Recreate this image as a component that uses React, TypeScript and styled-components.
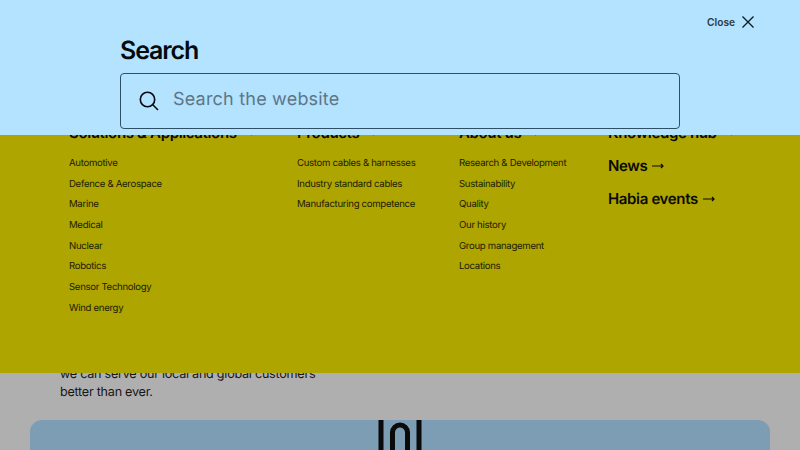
import React from 'react'
import styled, {createGlobalStyle} from 'styled-components'

const GlobalStyle = createGlobalStyle`
  html, body {
    margin: 0;
    padding: 0;
    background: #afafaf;
  }
  body {
    font-family: Inter, "Liberation Sans", sans-serif;
    text-rendering: geometricPrecision;
  }
`

const Page = styled.div`
  position: relative;
  width: 800px;
  height: 450px;
  overflow: hidden;
  background: #afafaf;
`

const Intro = styled.p`
  margin: 0;
  padding: 366px 0 0 60px;
  width: 262px;
  font-size: 12.6px;
  letter-spacing: -0.25px;
  line-height: 18px;
  color: #161616;
`

const HeroCard = styled.div`
  position: relative;
  height: 200px;
  margin: 18px 30px 0;
  border-radius: 12px;
  background: #7c9db3;
`

const HeroMark = styled.svg`
  position: absolute;
  top: 0;
  left: 346px;
  filter: blur(0.7px);
`

const MenuPanel = styled.nav`
  position: absolute;
  top: 0;
  left: 0;
  right: 0;
  height: 373px;
  background: #aea500;
  display: grid;
  grid-template-columns: 228px 162px 149px 1fr;
  padding: 122px 0 0 69px;
  box-sizing: border-box;
`

const Column = styled.div`
  display: flex;
  flex-direction: column;
`

const Heading = styled.a`
  display: flex;
  align-items: center;
  height: 20px;
  margin-bottom: 13px;
  font-size: 15px;
  font-weight: 600;
  letter-spacing: -0.35px;
  white-space: nowrap;
  color: #0a0a00;
`

const Arrow = styled.svg`
  margin: 2px 0 0 5px;
  flex: none;
`

const LinkList = styled.ul`
  list-style: none;
  margin: -1px 0 0;
  padding: 0;
`

const LinkItem = styled.li`
  height: 20.7px;
  line-height: 20.7px;
  font-size: 9.6px;
  letter-spacing: -0.3px;
  color: #1d1b00;
  white-space: nowrap;
`

const SearchPanel = styled.div`
  position: absolute;
  top: 0;
  left: 0;
  right: 0;
  height: 135px;
  box-sizing: border-box;
  padding: 37px 120px 0;
  background: #b3e3ff;
`

const SearchTitle = styled.h2`
  margin: 0 0 7px;
  font-size: 25px;
  line-height: 29px;
  font-weight: 600;
  letter-spacing: -1.1px;
  color: #050a0f;
`

const SearchBox = styled.div`
  display: flex;
  align-items: center;
  gap: 14px;
  box-sizing: border-box;
  height: 56px;
  padding: 0 18px;
  border: 1px solid #2f4f66;
  border-radius: 4px;
`

const SearchText = styled.span`
  margin-bottom: 4px;
  font-size: 18px;
  letter-spacing: 0.2px;
  color: #5d7688;
`

const CloseButton = styled.button`
  position: absolute;
  top: 13px;
  right: 43px;
  display: flex;
  align-items: center;
  gap: 4px;
  padding: 0;
  border: 0;
  background: none;
  font-family: inherit;
  font-size: 10.2px;
  font-weight: 600;
  color: #2b3b47;
`

const columns = [
  {
    title: 'Solutions & Applications',
    links: ['Automotive', 'Defence & Aerospace', 'Marine', 'Medical', 'Nuclear', 'Robotics', 'Sensor Technology', 'Wind energy'],
  },
  {
    title: 'Products',
    links: ['Custom cables & harnesses', 'Industry standard cables', 'Manufacturing competence'],
  },
  {
    title: 'About us',
    links: ['Research & Development', 'Sustainability', 'Quality', 'Our history', 'Group management', 'Locations'],
  },
]

const ArrowIcon = () => (
  <Arrow width="12" height="8" viewBox="0 0 12 8" fill="none" stroke="currentColor" strokeWidth="1.2">
    <path d="M0 4h11M9 2l2 2-2 2" />
  </Arrow>
)

export default function App() {
  return (
    <Page>
      <GlobalStyle />
      <Intro>
        we can serve our local and global customers better than ever.
      </Intro>
      <HeroCard>
        <HeroMark width="50" height="30" viewBox="0 0 50 30" fill="none" stroke="#0a0a0a" strokeWidth="5">
          <path d="M5 0v30M43 0v30M16.5 30V12.5a7.5 7.5 0 0 1 15 0V30" />
        </HeroMark>
      </HeroCard>

      <MenuPanel>
        {columns.map(column => (
          <Column key={column.title}>
            <Heading>
              {column.title}
              <ArrowIcon />
            </Heading>
            <LinkList>
              {column.links.map(link => (
                <LinkItem key={link}>{link}</LinkItem>
              ))}
            </LinkList>
          </Column>
        ))}
        <Column>
          <Heading>Knowledge hub<ArrowIcon /></Heading>
          <Heading>News<ArrowIcon /></Heading>
          <Heading>Habia events<ArrowIcon /></Heading>
        </Column>
      </MenuPanel>

      <SearchPanel>
        <SearchTitle>Search</SearchTitle>
        <SearchBox>
          <svg width="20" height="20" viewBox="0 0 20 20" fill="none" stroke="#050a0f" strokeWidth="1.6">
            <circle cx="8.5" cy="8.5" r="7.2" />
            <path d="M13.8 13.8 19 19" />
          </svg>
          <SearchText>Search the website</SearchText>
        </SearchBox>
      </SearchPanel>

      <CloseButton>
        Close
        <svg width="18" height="18" viewBox="0 0 18 18" fill="none" stroke="#0b1720" strokeWidth="1.3">
          <path d="M3.5 3.5l11 11M14.5 3.5l-11 11" />
        </svg>
      </CloseButton>
    </Page>
  )
}
